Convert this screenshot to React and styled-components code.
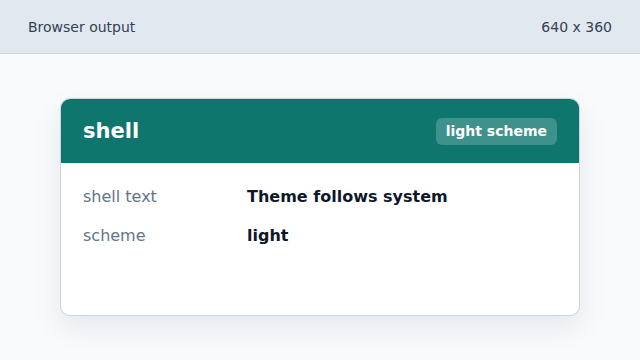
import React from 'react';
import styled, { createGlobalStyle } from 'styled-components';

const GlobalStyle = createGlobalStyle`
    html, body {
        margin: 0;
        padding: 0;
        background: #f8fafc;
        font-family: 'DejaVu Sans', 'Liberation Sans', sans-serif;
    }
`;

const Page = styled.div`
    width: 640px;
    height: 360px;
    display: flex;
    flex-direction: column;
    background: #f8fafc;
`;

const TopBar = styled.header`
    height: 53px;
    flex: none;
    display: flex;
    align-items: center;
    justify-content: space-between;
    padding: 0 28px;
    background: #e2e8f0;
    border-bottom: 1px solid #cbd5e1;
    color: #334155;
    font-size: 14px;
`;

const Stage = styled.main`
    flex: 1;
    display: flex;
    align-items: center;
    justify-content: center;
`;

const Card = styled.section`
    width: 520px;
    box-sizing: border-box;
    background: #ffffff;
    border: 1px solid #cbd5e1;
    border-radius: 10px;
    overflow: hidden;
    box-shadow: 0 12px 30px rgba(15, 23, 42, 0.08);
`;

const CardHeader = styled.div`
    height: 64px;
    display: flex;
    align-items: center;
    justify-content: space-between;
    padding: 0 22px;
    background: #0f766e;
    color: #ffffff;
`;

const Title = styled.h1`
    margin: 0;
    font-size: 21px;
    font-weight: bold;
`;

const Badge = styled.span`
    padding: 5px 10px;
    border-radius: 6px;
    background: rgba(255, 255, 255, 0.2);
    font-size: 14px;
    font-weight: bold;
    line-height: 17px;
`;

const CardBody = styled.dl`
    margin: 0;
    min-height: 152px;
    box-sizing: border-box;
    padding: 23px 22px 21px;
    display: grid;
    grid-template-columns: 164px 1fr;
    grid-auto-rows: 22px;
    row-gap: 17px;
    align-content: start;
    font-size: 16px;
    line-height: 22px;
`;

const Label = styled.dt`
    color: #64748b;
`;

const Value = styled.dd`
    margin: 0;
    color: #0f172a;
    font-weight: bold;
`;

const rows = [
    ['shell text', 'Theme follows system'],
    ['scheme', 'light'],
];

const App = () => (
    <Page>
        <GlobalStyle />
        <TopBar>
            <span>Browser output</span>
            <span>640 x 360</span>
        </TopBar>
        <Stage>
            <Card>
                <CardHeader>
                    <Title>shell</Title>
                    <Badge>light scheme</Badge>
                </CardHeader>
                <CardBody>
                    {rows.map(([label, value]) => (
                        <React.Fragment key={label}>
                            <Label>{label}</Label>
                            <Value>{value}</Value>
                        </React.Fragment>
                    ))}
                </CardBody>
            </Card>
        </Stage>
    </Page>
);

export default App;
